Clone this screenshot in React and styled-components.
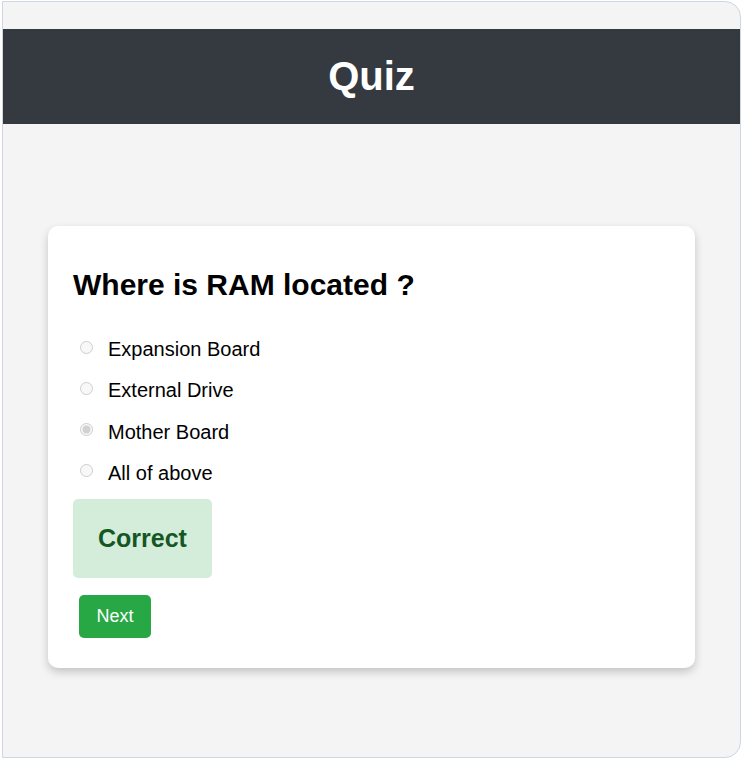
import React from 'react';
import styled, { createGlobalStyle } from 'styled-components';

const GlobalStyle = createGlobalStyle`
  html, body {
    margin: 0;
    padding: 0;
    background: #ffffff;
    font-family: 'Liberation Sans', Arial, sans-serif;
  }
`;

const options = [
  { label: 'Expansion Board', checked: false },
  { label: 'External Drive', checked: false },
  { label: 'Mother Board', checked: true },
  { label: 'All of above', checked: false },
];

export default function App() {
  return (
    <>
      <GlobalStyle />
      <Frame>
        <Header>
          <Title>Quiz</Title>
        </Header>
        <Card>
          <Question>Where is RAM located ?</Question>
          <OptionList>
            {options.map((opt) => (
              <Option key={opt.label}>
                <Radio type="radio" name="answer" checked={opt.checked} disabled readOnly />
                <OptionText>{opt.label}</OptionText>
              </Option>
            ))}
          </OptionList>
          <Result>Correct</Result>
          <NextButton>Next</NextButton>
        </Card>
      </Frame>
    </>
  );
}

const Frame = styled.div`
  box-sizing: border-box;
  margin: 1px 0 0 2px;
  width: 739px;
  height: 757px;
  padding-top: 27px;
  background: #f4f4f4;
  border: 1px solid #cdd6e2;
  border-radius: 0 16px 16px 0;
  overflow: hidden;
`;

const Header = styled.header`
  height: 95px;
  background: #343a40;
  display: flex;
  align-items: center;
  justify-content: center;
`;

const Title = styled.h1`
  margin: 0;
  color: #ffffff;
  font-size: 40px;
  font-weight: 700;
`;

const Card = styled.section`
  box-sizing: border-box;
  margin: 102px 45px 0;
  width: 647px;
  height: 442px;
  padding: 25px;
  background: #ffffff;
  border-radius: 10px;
  box-shadow: 0 4px 8px rgba(0, 0, 0, 0.2);
`;

const Question = styled.h2`
  margin: 17px 0 36px;
  font-size: 30px;
  line-height: 34px;
  font-weight: 700;
  color: #000000;
`;

const OptionList = styled.div`
  display: flex;
  flex-direction: column;
  gap: 18.3px;
`;

const Option = styled.label`
  display: flex;
  align-items: center;
  font-size: 20px;
  color: #000000;
`;

const Radio = styled.input`
  margin: 0 15px 5px 7px;
  width: 13px;
  height: 13px;
`;

const OptionText = styled.span`
  line-height: 23px;
`;

const Result = styled.div`
  display: inline-block;
  margin-top: 14px;
  padding: 25px;
  background: #d4edda;
  color: #155724;
  font-size: 25px;
  line-height: 29px;
  font-weight: 700;
  border-radius: 5px;
`;

const NextButton = styled.button`
  display: block;
  margin: 17px 0 0 6px;
  width: 72px;
  height: 43px;
  padding: 0;
  border: none;
  border-radius: 5px;
  background: #28a745;
  color: #ffffff;
  font-family: 'Liberation Sans', Arial, sans-serif;
  font-size: 18px;
  cursor: pointer;
`;
